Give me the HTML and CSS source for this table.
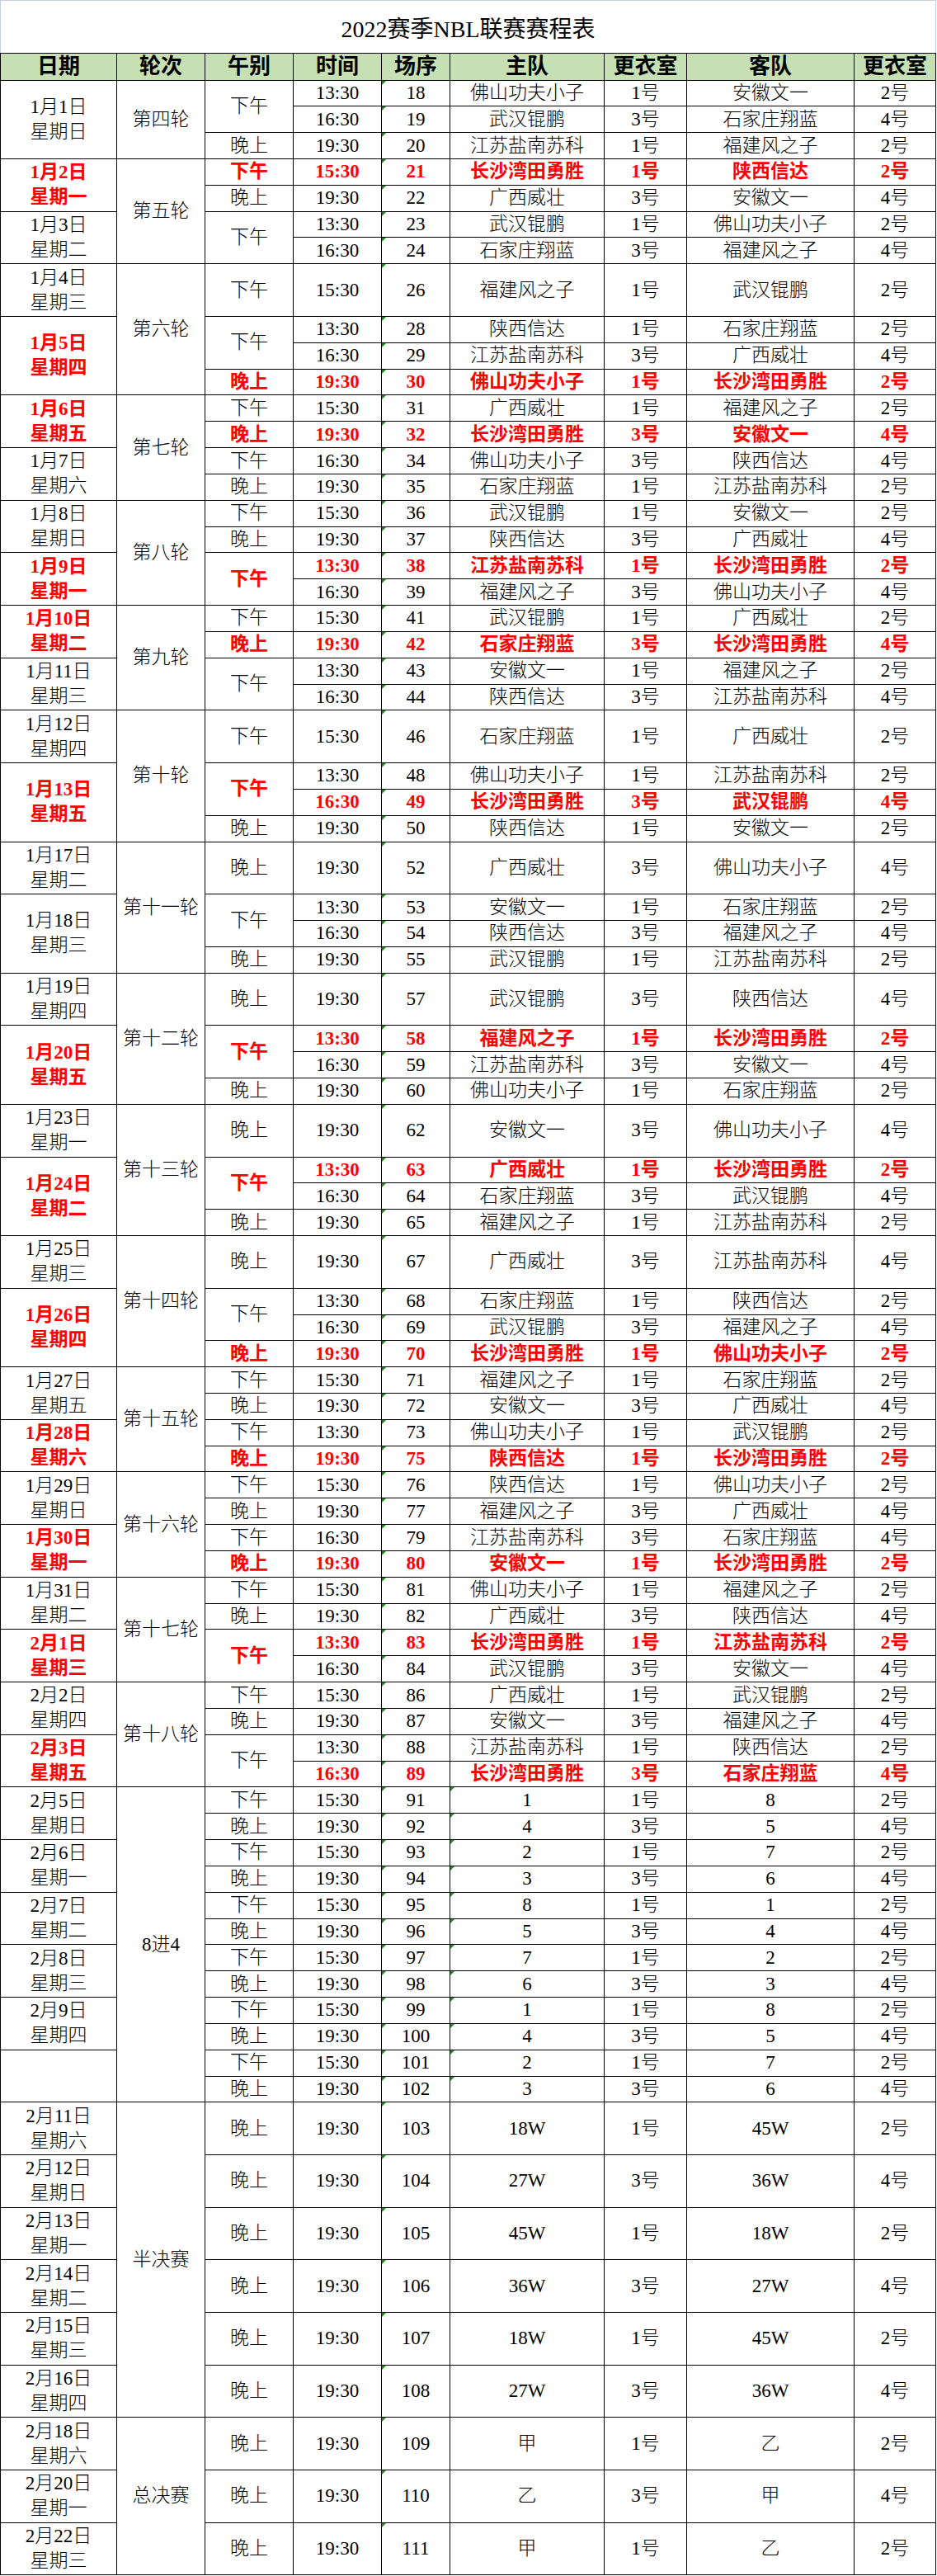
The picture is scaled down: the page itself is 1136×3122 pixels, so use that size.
FILE: index.html
```html
<!DOCTYPE html>
<html lang="zh-CN">
<head>
<meta charset="utf-8">
<title>2022赛季NBL联赛赛程表</title>
<link rel="stylesheet" href="styles.css">
</head>
<body>
<div class="sheet">
<table class="schedule">
<colgroup>
<col class="c-date"><col class="c-round"><col class="c-period"><col class="c-time"><col class="c-no"><col class="c-home"><col class="c-room"><col class="c-away"><col class="c-room2">
</colgroup>
<tr class="title-row"><td colspan="9">2022赛季NBL联赛赛程表</td></tr>
<tr class="head"><th>日期</th><th>轮次</th><th>午别</th><th>时间</th><th>场序</th><th>主队</th><th>更衣室</th><th>客队</th><th>更衣室</th></tr>

<tr><td rowspan="3">1月1日<br>星期日</td><td rowspan="3" class="rd">第四轮</td><td rowspan="2">下午</td><td>13:30</td><td class="mk">18</td><td>佛山功夫小子</td><td>1号</td><td>安徽文一</td><td>2号</td></tr>
<tr><td>16:30</td><td class="mk">19</td><td>武汉锟鹏</td><td>3号</td><td>石家庄翔蓝</td><td>4号</td></tr>
<tr><td>晚上</td><td>19:30</td><td class="mk">20</td><td>江苏盐南苏科</td><td>1号</td><td>福建风之子</td><td>2号</td></tr>

<tr class="hot"><td rowspan="2">1月2日<br>星期一</td><td rowspan="4" class="rd">第五轮</td><td>下午</td><td>15:30</td><td class="mk">21</td><td>长沙湾田勇胜</td><td>1号</td><td>陕西信达</td><td>2号</td></tr>
<tr><td>晚上</td><td>19:30</td><td class="mk">22</td><td>广西威壮</td><td>3号</td><td>安徽文一</td><td>4号</td></tr>
<tr><td rowspan="2">1月3日<br>星期二</td><td rowspan="2">下午</td><td>13:30</td><td class="mk">23</td><td>武汉锟鹏</td><td>1号</td><td>佛山功夫小子</td><td>2号</td></tr>
<tr><td>16:30</td><td class="mk">24</td><td>石家庄翔蓝</td><td>3号</td><td>福建风之子</td><td>4号</td></tr>

<tr class="tall"><td>1月4日<br>星期三</td><td rowspan="4" class="rd">第六轮</td><td>下午</td><td>15:30</td><td class="mk">26</td><td>福建风之子</td><td>1号</td><td>武汉锟鹏</td><td>2号</td></tr>
<tr><td rowspan="3" class="r">1月5日<br>星期四</td><td rowspan="2">下午</td><td>13:30</td><td class="mk">28</td><td>陕西信达</td><td>1号</td><td>石家庄翔蓝</td><td>2号</td></tr>
<tr><td>16:30</td><td class="mk">29</td><td>江苏盐南苏科</td><td>3号</td><td>广西威壮</td><td>4号</td></tr>
<tr class="hot"><td>晚上</td><td>19:30</td><td class="mk">30</td><td>佛山功夫小子</td><td>1号</td><td>长沙湾田勇胜</td><td>2号</td></tr>

<tr><td rowspan="2" class="r">1月6日<br>星期五</td><td rowspan="4" class="rd">第七轮</td><td>下午</td><td>15:30</td><td class="mk">31</td><td>广西威壮</td><td>1号</td><td>福建风之子</td><td>2号</td></tr>
<tr class="hot"><td>晚上</td><td>19:30</td><td class="mk">32</td><td>长沙湾田勇胜</td><td>3号</td><td>安徽文一</td><td>4号</td></tr>
<tr><td rowspan="2">1月7日<br>星期六</td><td>下午</td><td>16:30</td><td class="mk">34</td><td>佛山功夫小子</td><td>3号</td><td>陕西信达</td><td>4号</td></tr>
<tr><td>晚上</td><td>19:30</td><td class="mk">35</td><td>石家庄翔蓝</td><td>1号</td><td>江苏盐南苏科</td><td>2号</td></tr>

<tr><td rowspan="2">1月8日<br>星期日</td><td rowspan="4" class="rd">第八轮</td><td>下午</td><td>15:30</td><td class="mk">36</td><td>武汉锟鹏</td><td>1号</td><td>安徽文一</td><td>2号</td></tr>
<tr><td>晚上</td><td>19:30</td><td class="mk">37</td><td>陕西信达</td><td>3号</td><td>广西威壮</td><td>4号</td></tr>
<tr class="hot"><td rowspan="2">1月9日<br>星期一</td><td rowspan="2">下午</td><td>13:30</td><td class="mk">38</td><td>江苏盐南苏科</td><td>1号</td><td>长沙湾田勇胜</td><td>2号</td></tr>
<tr><td>16:30</td><td class="mk">39</td><td>福建风之子</td><td>3号</td><td>佛山功夫小子</td><td>4号</td></tr>

<tr><td rowspan="2" class="r">1月10日<br>星期二</td><td rowspan="4" class="rd">第九轮</td><td>下午</td><td>15:30</td><td class="mk">41</td><td>武汉锟鹏</td><td>1号</td><td>广西威壮</td><td>2号</td></tr>
<tr class="hot"><td>晚上</td><td>19:30</td><td class="mk">42</td><td>石家庄翔蓝</td><td>3号</td><td>长沙湾田勇胜</td><td>4号</td></tr>
<tr><td rowspan="2">1月11日<br>星期三</td><td rowspan="2">下午</td><td>13:30</td><td class="mk">43</td><td>安徽文一</td><td>1号</td><td>福建风之子</td><td>2号</td></tr>
<tr><td>16:30</td><td class="mk">44</td><td>陕西信达</td><td>3号</td><td>江苏盐南苏科</td><td>4号</td></tr>

<tr class="tall"><td>1月12日<br>星期四</td><td rowspan="4" class="rd">第十轮</td><td>下午</td><td>15:30</td><td class="mk">46</td><td>石家庄翔蓝</td><td>1号</td><td>广西威壮</td><td>2号</td></tr>
<tr><td rowspan="3" class="r">1月13日<br>星期五</td><td rowspan="2" class="r">下午</td><td>13:30</td><td class="mk">48</td><td>佛山功夫小子</td><td>1号</td><td>江苏盐南苏科</td><td>2号</td></tr>
<tr class="hot"><td>16:30</td><td class="mk">49</td><td>长沙湾田勇胜</td><td>3号</td><td>武汉锟鹏</td><td>4号</td></tr>
<tr><td>晚上</td><td>19:30</td><td class="mk">50</td><td>陕西信达</td><td>1号</td><td>安徽文一</td><td>2号</td></tr>

<tr class="tall"><td>1月17日<br>星期二</td><td rowspan="4" class="rd">第十一轮</td><td>晚上</td><td>19:30</td><td class="mk">52</td><td>广西威壮</td><td>3号</td><td>佛山功夫小子</td><td>4号</td></tr>
<tr><td rowspan="3">1月18日<br>星期三</td><td rowspan="2">下午</td><td>13:30</td><td class="mk">53</td><td>安徽文一</td><td>1号</td><td>石家庄翔蓝</td><td>2号</td></tr>
<tr><td>16:30</td><td class="mk">54</td><td>陕西信达</td><td>3号</td><td>福建风之子</td><td>4号</td></tr>
<tr><td>晚上</td><td>19:30</td><td class="mk">55</td><td>武汉锟鹏</td><td>1号</td><td>江苏盐南苏科</td><td>2号</td></tr>

<tr class="tall"><td>1月19日<br>星期四</td><td rowspan="4" class="rd">第十二轮</td><td>晚上</td><td>19:30</td><td class="mk">57</td><td>武汉锟鹏</td><td>3号</td><td>陕西信达</td><td>4号</td></tr>
<tr class="hot"><td rowspan="3">1月20日<br>星期五</td><td rowspan="2">下午</td><td>13:30</td><td class="mk">58</td><td>福建风之子</td><td>1号</td><td>长沙湾田勇胜</td><td>2号</td></tr>
<tr><td>16:30</td><td class="mk">59</td><td>江苏盐南苏科</td><td>3号</td><td>安徽文一</td><td>4号</td></tr>
<tr><td>晚上</td><td>19:30</td><td class="mk">60</td><td>佛山功夫小子</td><td>1号</td><td>石家庄翔蓝</td><td>2号</td></tr>

<tr class="tall"><td>1月23日<br>星期一</td><td rowspan="4" class="rd">第十三轮</td><td>晚上</td><td>19:30</td><td class="mk">62</td><td>安徽文一</td><td>3号</td><td>佛山功夫小子</td><td>4号</td></tr>
<tr class="hot"><td rowspan="3">1月24日<br>星期二</td><td rowspan="2">下午</td><td>13:30</td><td class="mk">63</td><td>广西威壮</td><td>1号</td><td>长沙湾田勇胜</td><td>2号</td></tr>
<tr><td>16:30</td><td class="mk">64</td><td>石家庄翔蓝</td><td>3号</td><td>武汉锟鹏</td><td>4号</td></tr>
<tr><td>晚上</td><td>19:30</td><td class="mk">65</td><td>福建风之子</td><td>1号</td><td>江苏盐南苏科</td><td>2号</td></tr>

<tr class="tall"><td>1月25日<br>星期三</td><td rowspan="4" class="rd">第十四轮</td><td>晚上</td><td>19:30</td><td class="mk">67</td><td>广西威壮</td><td>3号</td><td>江苏盐南苏科</td><td>4号</td></tr>
<tr><td rowspan="3" class="r">1月26日<br>星期四</td><td rowspan="2">下午</td><td>13:30</td><td class="mk">68</td><td>石家庄翔蓝</td><td>1号</td><td>陕西信达</td><td>2号</td></tr>
<tr><td>16:30</td><td class="mk">69</td><td>武汉锟鹏</td><td>3号</td><td>福建风之子</td><td>4号</td></tr>
<tr class="hot"><td>晚上</td><td>19:30</td><td class="mk">70</td><td>长沙湾田勇胜</td><td>1号</td><td>佛山功夫小子</td><td>2号</td></tr>

<tr><td rowspan="2">1月27日<br>星期五</td><td rowspan="4" class="rd">第十五轮</td><td>下午</td><td>15:30</td><td class="mk">71</td><td>福建风之子</td><td>1号</td><td>石家庄翔蓝</td><td>2号</td></tr>
<tr><td>晚上</td><td>19:30</td><td class="mk">72</td><td>安徽文一</td><td>3号</td><td>广西威壮</td><td>4号</td></tr>
<tr><td rowspan="2" class="r">1月28日<br>星期六</td><td>下午</td><td>13:30</td><td class="mk">73</td><td>佛山功夫小子</td><td>1号</td><td>武汉锟鹏</td><td>2号</td></tr>
<tr class="hot"><td>晚上</td><td>19:30</td><td class="mk">75</td><td>陕西信达</td><td>1号</td><td>长沙湾田勇胜</td><td>2号</td></tr>

<tr><td rowspan="2">1月29日<br>星期日</td><td rowspan="4" class="rd">第十六轮</td><td>下午</td><td>15:30</td><td class="mk">76</td><td>陕西信达</td><td>1号</td><td>佛山功夫小子</td><td>2号</td></tr>
<tr><td>晚上</td><td>19:30</td><td class="mk">77</td><td>福建风之子</td><td>3号</td><td>广西威壮</td><td>4号</td></tr>
<tr><td rowspan="2" class="r">1月30日<br>星期一</td><td>下午</td><td>16:30</td><td class="mk">79</td><td>江苏盐南苏科</td><td>3号</td><td>石家庄翔蓝</td><td>4号</td></tr>
<tr class="hot"><td>晚上</td><td>19:30</td><td class="mk">80</td><td>安徽文一</td><td>1号</td><td>长沙湾田勇胜</td><td>2号</td></tr>

<tr><td rowspan="2">1月31日<br>星期二</td><td rowspan="4" class="rd">第十七轮</td><td>下午</td><td>15:30</td><td class="mk">81</td><td>佛山功夫小子</td><td>1号</td><td>福建风之子</td><td>2号</td></tr>
<tr><td>晚上</td><td>19:30</td><td class="mk">82</td><td>广西威壮</td><td>3号</td><td>陕西信达</td><td>4号</td></tr>
<tr class="hot"><td rowspan="2">2月1日<br>星期三</td><td rowspan="2">下午</td><td>13:30</td><td class="mk">83</td><td>长沙湾田勇胜</td><td>1号</td><td>江苏盐南苏科</td><td>2号</td></tr>
<tr><td>16:30</td><td class="mk">84</td><td>武汉锟鹏</td><td>3号</td><td>安徽文一</td><td>4号</td></tr>

<tr><td rowspan="2">2月2日<br>星期四</td><td rowspan="4" class="rd">第十八轮</td><td>下午</td><td>15:30</td><td class="mk">86</td><td>广西威壮</td><td>1号</td><td>武汉锟鹏</td><td>2号</td></tr>
<tr><td>晚上</td><td>19:30</td><td class="mk">87</td><td>安徽文一</td><td>3号</td><td>福建风之子</td><td>4号</td></tr>
<tr><td rowspan="2" class="r">2月3日<br>星期五</td><td rowspan="2">下午</td><td>13:30</td><td class="mk">88</td><td>江苏盐南苏科</td><td>1号</td><td>陕西信达</td><td>2号</td></tr>
<tr class="hot"><td>16:30</td><td class="mk">89</td><td>长沙湾田勇胜</td><td>3号</td><td>石家庄翔蓝</td><td>4号</td></tr>

<tr><td rowspan="2">2月5日<br>星期日</td><td rowspan="12" class="rd">8进4</td><td>下午</td><td>15:30</td><td class="mk">91</td><td class="mk">1</td><td>1号</td><td>8</td><td>2号</td></tr>
<tr><td>晚上</td><td>19:30</td><td class="mk">92</td><td class="mk">4</td><td>3号</td><td>5</td><td>4号</td></tr>
<tr><td rowspan="2">2月6日<br>星期一</td><td>下午</td><td>15:30</td><td class="mk">93</td><td class="mk">2</td><td>1号</td><td>7</td><td>2号</td></tr>
<tr><td>晚上</td><td>19:30</td><td class="mk">94</td><td class="mk">3</td><td>3号</td><td>6</td><td>4号</td></tr>
<tr><td rowspan="2">2月7日<br>星期二</td><td>下午</td><td>15:30</td><td class="mk">95</td><td class="mk">8</td><td>1号</td><td>1</td><td>2号</td></tr>
<tr><td>晚上</td><td>19:30</td><td class="mk">96</td><td class="mk">5</td><td>3号</td><td>4</td><td>4号</td></tr>
<tr><td rowspan="2">2月8日<br>星期三</td><td>下午</td><td>15:30</td><td class="mk">97</td><td class="mk">7</td><td>1号</td><td>2</td><td>2号</td></tr>
<tr><td>晚上</td><td>19:30</td><td class="mk">98</td><td class="mk">6</td><td>3号</td><td>3</td><td>4号</td></tr>
<tr><td rowspan="2">2月9日<br>星期四</td><td>下午</td><td>15:30</td><td class="mk">99</td><td class="mk">1</td><td>1号</td><td>8</td><td>2号</td></tr>
<tr><td>晚上</td><td>19:30</td><td class="mk">100</td><td class="mk">4</td><td>3号</td><td>5</td><td>4号</td></tr>
<tr><td rowspan="2"></td><td>下午</td><td>15:30</td><td class="mk">101</td><td class="mk">2</td><td>1号</td><td>7</td><td>2号</td></tr>
<tr><td>晚上</td><td>19:30</td><td class="mk">102</td><td class="mk">3</td><td>3号</td><td>6</td><td>4号</td></tr>

<tr class="tall"><td>2月11日<br>星期六</td><td rowspan="6" class="rd">半决赛</td><td>晚上</td><td>19:30</td><td class="mk">103</td><td>18W</td><td>1号</td><td>45W</td><td>2号</td></tr>
<tr class="tall"><td>2月12日<br>星期日</td><td>晚上</td><td>19:30</td><td class="mk">104</td><td>27W</td><td>3号</td><td>36W</td><td>4号</td></tr>
<tr class="tall"><td>2月13日<br>星期一</td><td>晚上</td><td>19:30</td><td class="mk">105</td><td>45W</td><td>1号</td><td>18W</td><td>2号</td></tr>
<tr class="tall"><td>2月14日<br>星期二</td><td>晚上</td><td>19:30</td><td class="mk">106</td><td>36W</td><td>3号</td><td>27W</td><td>4号</td></tr>
<tr class="tall"><td>2月15日<br>星期三</td><td>晚上</td><td>19:30</td><td class="mk">107</td><td>18W</td><td>1号</td><td>45W</td><td>2号</td></tr>
<tr class="tall"><td>2月16日<br>星期四</td><td>晚上</td><td>19:30</td><td class="mk">108</td><td>27W</td><td>3号</td><td>36W</td><td>4号</td></tr>

<tr class="tall"><td>2月18日<br>星期六</td><td rowspan="3" class="rd">总决赛</td><td>晚上</td><td>19:30</td><td class="mk">109</td><td>甲</td><td>1号</td><td>乙</td><td>2号</td></tr>
<tr class="tall"><td>2月20日<br>星期一</td><td>晚上</td><td>19:30</td><td class="mk">110</td><td>乙</td><td>3号</td><td>甲</td><td>4号</td></tr>
<tr class="tall"><td>2月22日<br>星期三</td><td>晚上</td><td>19:30</td><td class="mk">111</td><td>甲</td><td>1号</td><td>乙</td><td>2号</td></tr>
</table>
</div>
</body>
</html>
```

FILE: styles.css
```css
html, body {
  margin: 0;
  padding: 0;
  background: #ffffff;
}

.sheet {
  width: 1136px;
}

.schedule {
  border-collapse: collapse;
  table-layout: fixed;
  width: 1134px;
  font-family: "Liberation Serif", "Noto Sans CJK SC", serif;
  font-size: 23px;
  font-weight: 300;
  color: #000000;
}

.c-date { width: 141px; }
.c-round { width: 107px; }
.c-period { width: 107px; }
.c-time { width: 107px; }
.c-no { width: 83px; }
.c-home { width: 187px; }
.c-room { width: 100px; }
.c-away { width: 203px; }
.c-room2 { width: 99px; }

.schedule td,
.schedule th {
  border: 1px solid #000000;
  padding: 0;
  text-align: center;
  vertical-align: middle;
  white-space: nowrap;
  line-height: 30px;
}

.schedule tr {
  height: 31.84px;
}

.schedule tr.tall {
  height: 63.68px;
}

.schedule tr.title-row {
  height: 64px;
}

.title-row td {
  border: 1px solid #c8cfdc;
  border-bottom: 1px solid #000000;
  font-size: 28px;
  font-weight: 400;
  padding-top: 6px;
}

.schedule tr.head {
  height: 32.5px;
}

.head th {
  background: #c6e0b4;
  font-size: 26px;
  font-weight: 700;
  line-height: 30px;
}

.hot td,
.schedule td.r {
  color: #ff0000;
  font-weight: 700;
}

.schedule td.rd {
  color: #000000;
  font-weight: 300;
}

.mk {
  position: relative;
}

.mk::before {
  content: "";
  position: absolute;
  left: 0;
  top: 0;
  width: 0;
  height: 0;
  border-top: 5px solid #1f8c1f;
  border-right: 5px solid transparent;
}
```
